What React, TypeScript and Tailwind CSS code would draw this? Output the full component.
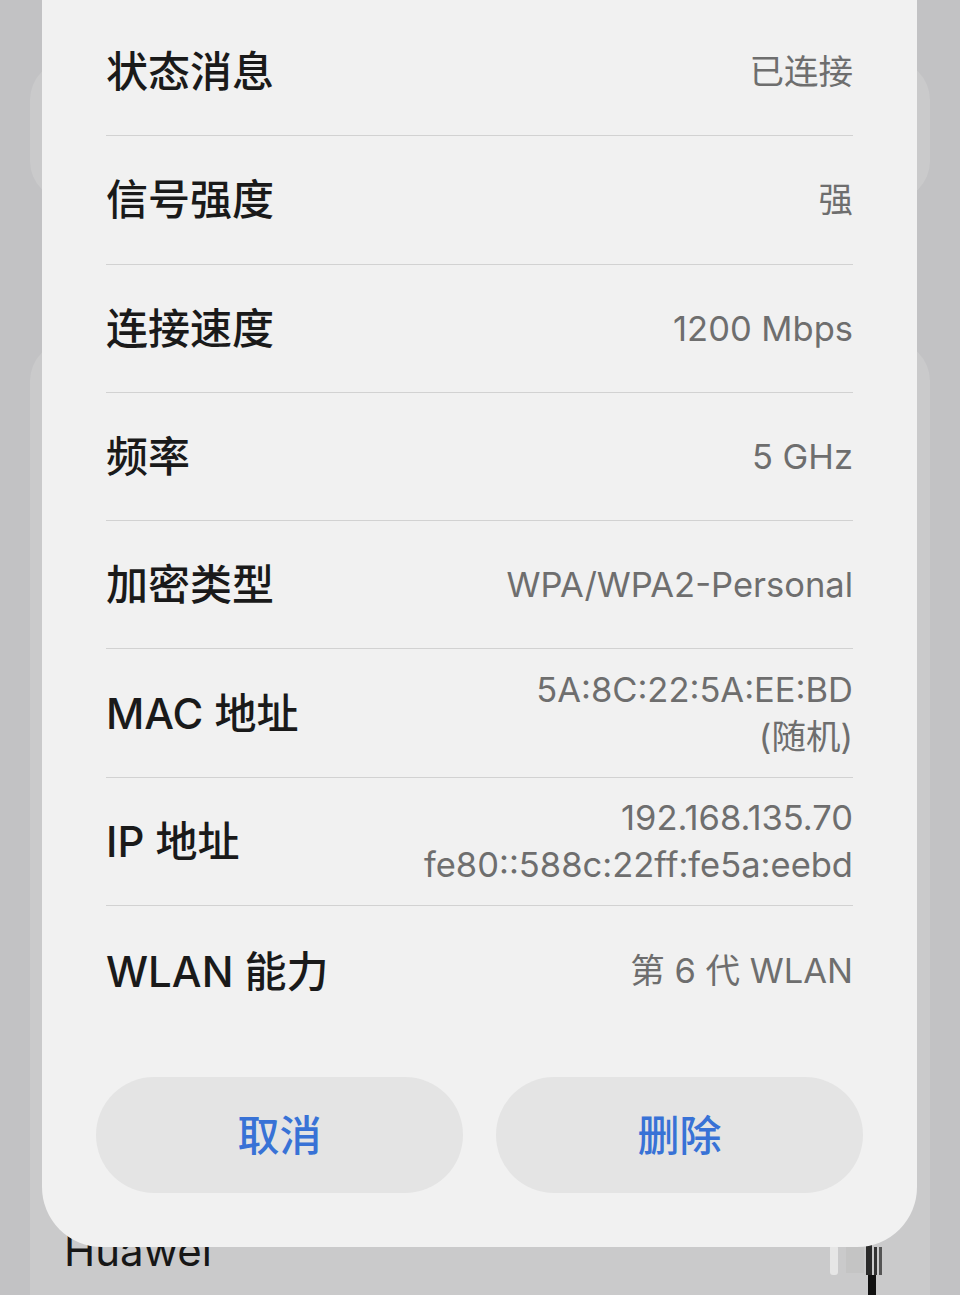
import React from "react";

const rows: { label: string; value: string[] }[] = [
  { label: "状态消息", value: ["已连接"] },
  { label: "信号强度", value: ["强"] },
  { label: "连接速度", value: ["1200 Mbps"] },
  { label: "频率", value: ["5 GHz"] },
  { label: "加密类型", value: ["WPA/WPA2-Personal"] },
  { label: "MAC 地址", value: ["5A:8C:22:5A:EE:BD", "(随机)"] },
  { label: "IP 地址", value: ["192.168.135.70", "fe80::588c:22ff:fe5a:eebd"] },
];

export default function App() {
  return (
    <div className="relative w-[960px] h-[1295px] overflow-hidden bg-[#c2c2c4] font-['Inter','Noto_Sans_CJK_SC',sans-serif]">
      {/* background page */}
      <div className="flex flex-col h-full">
        <div className="mt-[60px] mx-[30px] h-[150px] rounded-[40px] bg-[#cacacb]" />
        <div className="mt-[140px] mx-[30px] flex-1 rounded-t-[40px] bg-[#cacacb] pt-[886px] pl-[34px] pr-[30px] flex items-start justify-between">
          <div className="text-[42px] leading-[48px] text-[#161616]">Huawei</div>
          <svg width="70" height="50" viewBox="0 0 70 50" className="mt-[18px]">
            <rect x="0" y="0" width="8" height="30" rx="3" fill="#e6e6e6" />
            <rect x="16" y="2" width="18" height="26" fill="#c0c0c0" opacity="0.6" />
            <rect x="36" y="0" width="6" height="30" fill="#2a2a2a" />
            <rect x="44" y="2" width="3" height="28" fill="#333" />
            <rect x="49" y="2" width="3" height="28" fill="#555" />
            <rect x="38" y="30" width="8" height="20" fill="#111" />
          </svg>
        </div>
      </div>

      {/* dialog */}
      <div className="absolute top-0 left-[42px] w-[875px] bg-[#f1f1f1] rounded-b-[60px] pt-[8px] pb-[54px]">
        <div className="px-[64px]">
          {rows.map((r) => (
            <div
              key={r.label}
              className="h-[128.3px] flex items-center justify-between border-b border-[#d2d2d2]"
            >
              <div className="text-[42px] font-medium text-[#1a1a1a] whitespace-nowrap">{r.label}</div>
              <div className="text-right text-[34.5px] leading-[47px] text-[#6e6e6e]">
                {r.value.map((v) => (
                  <div key={v} className="whitespace-nowrap">{v}</div>
                ))}
              </div>
            </div>
          ))}
          <div className="h-[130px] flex items-center justify-between">
            <div className="text-[42px] font-medium text-[#1a1a1a] whitespace-nowrap">WLAN 能力</div>
            <div className="text-[34.5px] text-[#6e6e6e] whitespace-nowrap">第 6 代 WLAN</div>
          </div>
        </div>
        <div className="mt-[41px] px-[54px] flex gap-[33px]">
          <button className="flex-1 h-[116px] rounded-full bg-[#e4e4e4] text-[42px] font-medium text-[#3872d6]">
            取消
          </button>
          <button className="flex-1 h-[116px] rounded-full bg-[#e4e4e4] text-[42px] font-medium text-[#3872d6]">
            删除
          </button>
        </div>
      </div>
    </div>
  );
}
